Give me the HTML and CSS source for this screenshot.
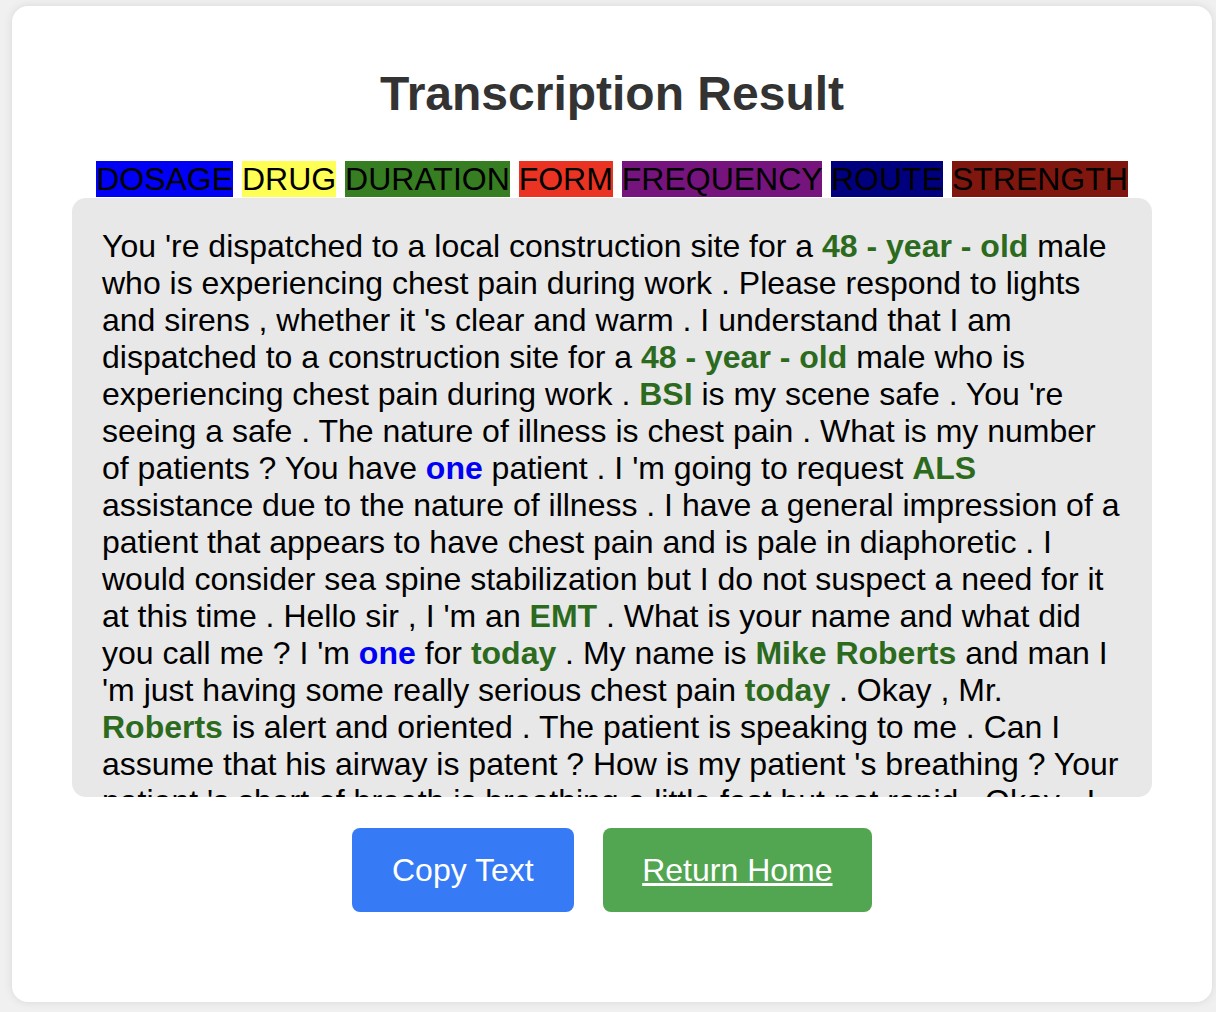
FILE: index.html
```html
<!DOCTYPE html>
<html lang="en">
<head>
<meta charset="utf-8">
<title>Transcription Result</title>
<link rel="stylesheet" href="styles.css">
</head>
<body>
<main class="card">
  <h1 class="title">Transcription Result</h1>
  <div class="legend">
    <span class="tag tag-dosage">DOSAGE</span>
    <span class="tag tag-drug">DRUG</span>
    <span class="tag tag-duration">DURATION</span>
    <span class="tag tag-form">FORM</span>
    <span class="tag tag-frequency">FREQUENCY</span>
    <span class="tag tag-route">ROUTE</span>
    <span class="tag tag-strength">STRENGTH</span>
  </div>
  <div class="transcript">
    You 're dispatched to a local construction site for a <b class="ent ent-duration">48 - year - old</b> male who is experiencing chest pain during work . Please respond to lights and sirens , whether it 's clear and warm . I understand that I am dispatched to a construction site for a <b class="ent ent-duration">48 - year - old</b> male who is experiencing chest pain during work . <b class="ent ent-duration">BSI</b> is my scene safe . You 're seeing a safe . The nature of illness is chest pain . What is my number of patients ? You have <b class="ent ent-dosage">one</b> patient . I 'm going to request <b class="ent ent-duration">ALS</b> assistance due to the nature of illness . I have a general impression of a patient that appears to have chest pain and is pale in diaphoretic . I would consider sea spine stabilization but I do not suspect a need for it at this time . Hello sir , I 'm an <b class="ent ent-duration">EMT</b> . What is your name and what did you call me ? I 'm <b class="ent ent-dosage">one</b> for <b class="ent ent-duration">today</b> . My name is <b class="ent ent-duration">Mike Roberts</b> and man I 'm just having some really serious chest pain <b class="ent ent-duration">today</b> . Okay , Mr. <b class="ent ent-duration">Roberts</b> is alert and oriented . The patient is speaking to me . Can I assume that his airway is patent ? How is my patient 's breathing ? Your patient 's short of breath is breathing a little fast but not rapid . Okay , I 'm going to apply oxygen to the patient via a non - rebreather mask at fifteen liters per minute . What is the patient 's pulse ? The pulse is regular and a little fast .
  </div>
  <div class="actions">
    <button class="btn btn-copy" type="button">Copy Text</button>
    <a class="btn btn-home" href="#">Return Home</a>
  </div>
</main>
</body>
</html>
```

FILE: styles.css
```css
html, body {
  margin: 0;
  padding: 0;
}

body {
  background: #f0f0f0;
  font-family: "Liberation Sans", Arial, Helvetica, sans-serif;
  padding: 6px 4px 10px 12px;
}

.card {
  background: #ffffff;
  border-radius: 16px;
  box-shadow: 0 0 10px rgba(0, 0, 0, 0.1);
  padding: 60px 60px 60px 60px;
  display: flex;
  flex-direction: column;
  align-items: center;
}

.title {
  margin: 0 0 40px 0;
  font-size: 48px;
  font-weight: bold;
  color: #333333;
  line-height: normal;
  text-align: center;
}

.legend {
  font-size: 32px;
  line-height: normal;
  color: #000000;
  text-align: center;
}

.tag-dosage { background: #0000f5; }
.tag-drug { background: #fffe54; }
.tag-duration { background: #377d22; }
.tag-form { background: #ea3323; }
.tag-frequency { background: #75147c; }
.tag-route { background: #00007f; }
.tag-strength { background: #7f170e; }

.transcript {
  box-sizing: border-box;
  width: 1080px;
  height: 599px;
  overflow: hidden;
  background: #e8e8e8;
  border-radius: 14px;
  padding: 30px;
  font-size: 32px;
  line-height: normal;
  color: #000000;
  text-align: left;
}

.ent {
  font-weight: bold;
}

.ent-duration { color: #2c6b1e; }
.ent-dosage { color: #0000f5; }

.actions {
  display: flex;
  justify-content: center;
  gap: 29px;
  margin-top: 31px;
  margin-bottom: 30px;
}

.btn {
  display: inline-block;
  font-family: "Liberation Sans", Arial, Helvetica, sans-serif;
  font-size: 32px;
  line-height: normal;
  color: #ffffff;
  border: none;
  border-radius: 8px;
  padding: 23.5px 40px;
  cursor: pointer;
}

.btn-copy {
  background: #367af6;
}

.btn-home {
  background: #53a651;
  text-decoration: underline;
  padding-left: 39.5px;
  padding-right: 39.5px;
}
```
